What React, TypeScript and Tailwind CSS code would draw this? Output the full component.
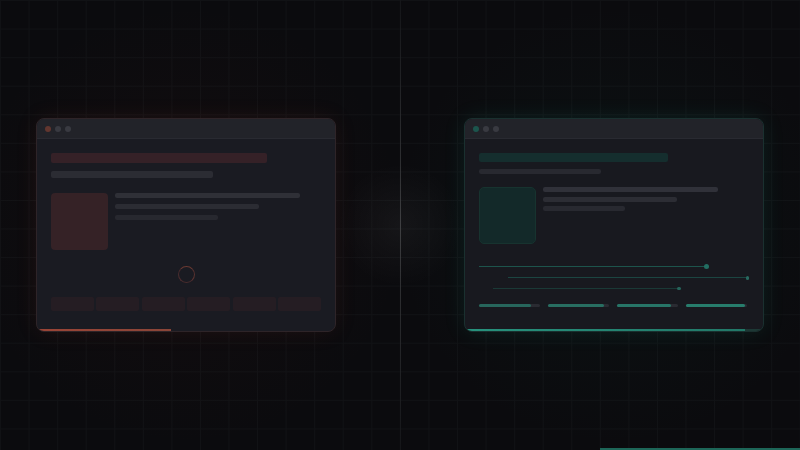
import React from "react";

function Dots({ accent }: { accent: string }) {
  return (
    <div className="flex h-[20px] items-center gap-[4px] border-b border-[#292a31] bg-[#222329] px-[8px]">
      <span className={`h-[6px] w-[6px] rounded-full ${accent}`} />
      <span className="h-[6px] w-[6px] rounded-full bg-[#393a41]" />
      <span className="h-[6px] w-[6px] rounded-full bg-[#393a41]" />
    </div>
  );
}

function LeftWindow() {
  return (
    <div className="flex h-[214px] w-[300px] flex-col overflow-hidden rounded-[8px] border border-[#2e2428] bg-[#1a1b22] shadow-[0_0_22px_rgba(170,70,50,0.10)]">
      <Dots accent="bg-[#62362f]" />
      <div className="flex flex-1 flex-col px-[14px] pt-[14px]">
        <div className="h-[10px] w-[216px] rounded-[2px] bg-[#352127]" />
        <div className="mt-[8px] h-[7px] w-[162px] rounded-[2px] bg-[#2b2c33]" />
        <div className="mt-[15px] flex gap-[7px]">
          <div className="h-[57px] w-[57px] rounded-[4px] bg-[#352226]" />
          <div className="flex flex-col gap-[6px]">
            <div className="h-[5px] w-[185px] rounded-[2px] bg-[#2f3037]" />
            <div className="h-[5px] w-[144px] rounded-[2px] bg-[#2b2c33]" />
            <div className="h-[5px] w-[103px] rounded-[2px] bg-[#27282f]" />
          </div>
        </div>
        <div className="mt-[16px] flex justify-center">
          <div className="h-[17px] w-[17px] rounded-full border-[1.5px] border-[#4a2c2e] border-t-[#6a3932] border-r-[#5a3330]" />
        </div>
        <div className="mt-[14px] flex gap-[2.6px]">
          {[0, 1, 2, 3, 4, 5].map((i) => (
            <div key={i} className="h-[14px] flex-1 rounded-[2px] bg-[#251d23]" />
          ))}
        </div>
      </div>
      <div className="mt-auto h-[2px] w-[134px] bg-[linear-gradient(to_right,#9a4436,#8a4538)]" />
    </div>
  );
}

const bars = [85, 92, 88, 96];

function RightWindow() {
  return (
    <div className="flex h-[214px] w-[300px] flex-col overflow-hidden rounded-[8px] border border-[#1a302f] bg-[#18191f] shadow-[0_0_22px_rgba(40,180,150,0.11)]">
      <Dots accent="bg-[#1c554d]" />
      <div className="flex flex-1 flex-col px-[14px] pt-[14px]">
        <div className="h-[9px] w-[189px] rounded-[2px] bg-[#152e2e]" />
        <div className="mt-[7px] h-[5px] w-[122px] rounded-[2px] bg-[#282930]" />
        <div className="mt-[13px] flex gap-[7px]">
          <div className="h-[57px] w-[57px] rounded-[5px] border border-[#17332f] bg-[#132929]" />
          <div className="flex flex-col gap-[4.5px]">
            <div className="h-[5px] w-[175px] rounded-[2px] bg-[#303139]" />
            <div className="h-[5px] w-[134px] rounded-[2px] bg-[#2c2d34]" />
            <div className="h-[5px] w-[82px] rounded-[2px] bg-[#282930]" />
          </div>
        </div>
        <div className="mt-[20px] flex flex-col">
          <div className="flex items-center">
            <div className="h-[1.5px] w-[227px] bg-[#1d544c]" />
            <div className="-ml-[2px] h-[5px] w-[5px] rounded-full bg-[#226e62]" />
          </div>
          <div className="mt-[7px] flex items-center pl-[29px]">
            <div className="h-[1.2px] w-[241px] bg-[#1b4541]" />
            <div className="-ml-[1px] h-[3.5px] w-[3.5px] rounded-full bg-[#286a60]" />
          </div>
          <div className="mt-[7px] flex items-center pl-[14px]">
            <div className="h-[1.2px] w-[185px] bg-[#1a3936]" />
            <div className="-ml-[1px] h-[3.5px] w-[3.5px] rounded-full bg-[#26645a]" />
          </div>
        </div>
        <div className="mt-[14px] flex gap-[8.5px] pr-[2px]">
          {bars.map((p, i) => (
            <div key={i} className="h-[3px] flex-1 rounded-full bg-[#2a2b32]">
              <div
                className="h-full rounded-full bg-[#27806e]"
                style={{ width: `${p}%`, opacity: 0.7 + i * 0.09 }}
              />
            </div>
          ))}
        </div>
      </div>
      <div className="mt-auto flex h-[2px] w-full">
        <div className="h-full w-[94%] bg-[linear-gradient(to_right,#27927d,#227868)]" />
        <div className="h-full flex-1 bg-[#1d3835]" />
      </div>
    </div>
  );
}

export default function App() {
  return (
    <div className="relative h-[450px] w-[800px] overflow-hidden bg-[#0b0b0e]">
      <div className="absolute inset-0 bg-[linear-gradient(to_right,#111215_1px,transparent_1px),linear-gradient(to_bottom,#111215_1px,transparent_1px)] bg-[size:28.571px_28.571px]" />
      <div className="absolute inset-0 bg-[radial-gradient(circle_at_186px_225px,rgba(120,40,30,0.07),transparent_220px),radial-gradient(circle_at_614px_225px,rgba(20,110,90,0.07),transparent_220px)]" />
      <div className="absolute inset-0 bg-[radial-gradient(circle_at_400px_225px,rgba(255,255,255,0.045),transparent_62px)]" />
      <div className="absolute left-[400px] top-0 h-[450px] w-px bg-[linear-gradient(to_bottom,rgba(255,255,255,0.02),rgba(255,255,255,0.16)_50%,rgba(255,255,255,0.02))]" />
      <div className="relative flex h-full items-center justify-center gap-[128px]">
        <LeftWindow />
        <RightWindow />
      </div>
      <div className="absolute bottom-0 right-0 h-[2px] w-[200px] bg-[#1d6658]" />
    </div>
  );
}
